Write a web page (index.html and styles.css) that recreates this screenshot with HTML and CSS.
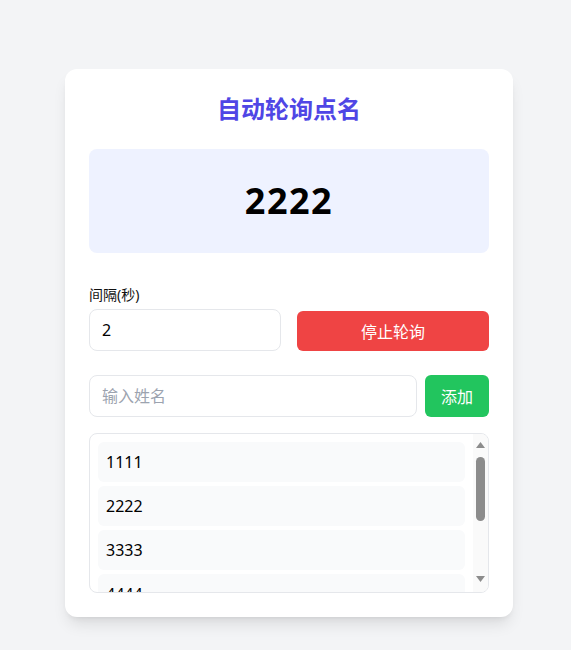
FILE: index.html
```html
<!DOCTYPE html>
<html lang="zh">
<head>
<meta charset="utf-8">
<title>自动轮询点名</title>
<link rel="stylesheet" href="styles.css">
</head>
<body>
<div class="card">
  <h1 class="title">自动轮询点名</h1>
  <div class="display">2222</div>
  <div class="controls">
    <div class="field">
      <label class="label">间隔(秒)</label>
      <input class="input" type="text" value="2">
    </div>
    <button class="btn btn-stop">停止轮询</button>
  </div>
  <div class="add-row">
    <input class="input input-name" type="text" placeholder="输入姓名">
    <button class="btn btn-add">添加</button>
  </div>
  <div class="list-box">
    <div class="list">
      <div class="item">1111</div>
      <div class="item">2222</div>
      <div class="item">3333</div>
      <div class="item">4444</div>
    </div>
    <div class="scrollbar">
      <svg class="arrow arrow-up" width="9" height="6" viewBox="0 0 9 6"><path d="M4.5 0L9 6H0z" fill="#8c8c8c"/></svg>
      <div class="thumb"></div>
      <div class="spacer"></div>
      <svg class="arrow arrow-down" width="9" height="6" viewBox="0 0 9 6"><path d="M0 0H9L4.5 6z" fill="#8c8c8c"/></svg>
    </div>
  </div>
</div>
</body>
</html>
```

FILE: styles.css
```css
* { box-sizing: border-box; }
html, body { margin: 0; padding: 0; }
body {
  background: #f3f4f6;
  font-family: "Noto Sans", "Noto Sans CJK SC", sans-serif;
  color: #000;
  min-height: 650px;
}
.card {
  width: 448px;
  margin: 69px 0 0 65px;
  background: #fff;
  border-radius: 12px;
  padding: 24px;
  box-shadow: 0 10px 15px -3px rgba(0,0,0,0.1), 0 4px 6px -4px rgba(0,0,0,0.1);
}
.title {
  margin: 0 0 24px;
  text-align: center;
  font-size: 24px;
  line-height: 32px;
  font-weight: 700;
  color: #4f46e5;
}
.display {
  background: #eef2ff;
  border-radius: 8px;
  padding: 32px;
  text-align: center;
  font-size: 36px;
  line-height: 40px;
  font-weight: 700;
  letter-spacing: 1.5px;
  margin-bottom: 32px;
}
.controls {
  display: grid;
  grid-template-columns: 1fr 1fr;
  gap: 16px;
  align-items: end;
}
.field { display: flex; flex-direction: column; }
.label {
  font-size: 14px;
  line-height: 20px;
  margin-bottom: 4px;
  color: #111;
}
.input {
  height: 42px;
  border: 1px solid #e5e7eb;
  border-radius: 8px;
  padding: 0 12px;
  font-family: inherit;
  font-size: 16px;
  color: #000;
  outline: none;
  width: 100%;
}
.input::placeholder { color: #9ca3af; }
.btn {
  border: none;
  border-radius: 6px;
  color: #fff;
  font-family: inherit;
  font-size: 16px;
  cursor: pointer;
}
.btn-stop { background: #ef4444; height: 40px; }
.add-row {
  display: flex;
  gap: 8px;
  margin-top: 24px;
}
.input-name { flex: 1; }
.btn-add { background: #22c55e; width: 64px; height: 42px; }
.list-box {
  margin-top: 16px;
  height: 160px;
  border: 1px solid #e5e7eb;
  border-radius: 8px;
  display: flex;
  overflow: hidden;
}
.list {
  flex: 1;
  padding: 8px;
  overflow: hidden;
  display: flex;
  flex-direction: column;
  gap: 4px;
}
.item {
  flex: none;
  background: #f9fafb;
  border-radius: 6px;
  padding: 8px;
  font-size: 16px;
  line-height: 24px;
}
.scrollbar {
  width: 15px;
  flex: none;
  background: #fafafa;
  display: flex;
  flex-direction: column;
  align-items: center;
  padding: 8px 0 10px;
}
.arrow { display: block; flex: none; }
.thumb {
  flex: none;
  width: 9px;
  height: 64px;
  margin-top: 9px;
  background: #8c8c8c;
  border-radius: 5px;
}
.spacer { flex: 1; }
```
